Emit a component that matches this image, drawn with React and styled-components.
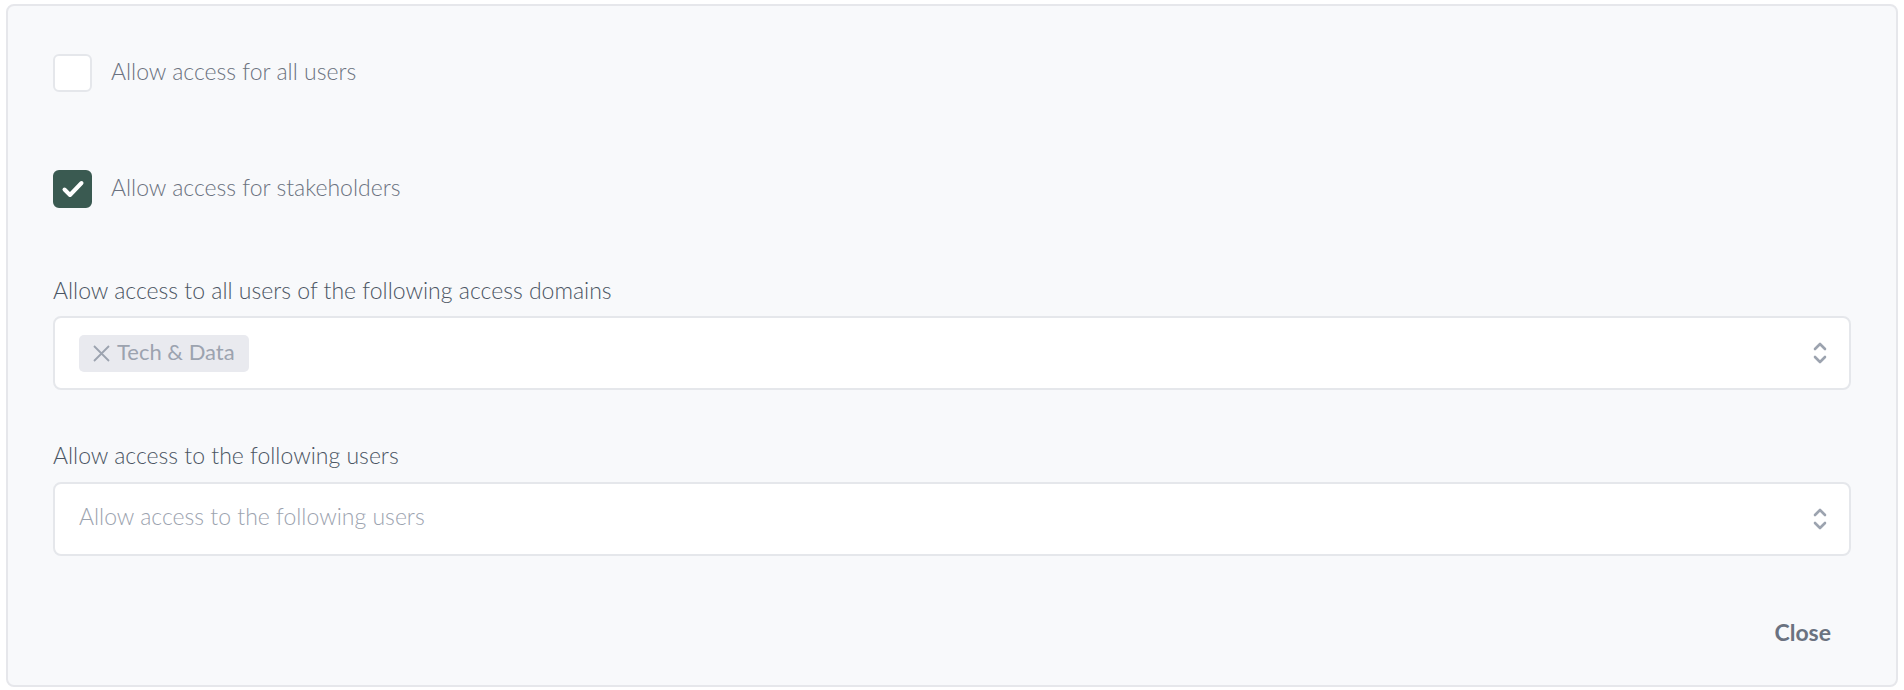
import styled, { createGlobalStyle } from "styled-components";

const GlobalStyle = createGlobalStyle`
body {
    margin: 0;
    background: #ffffff;
    font-family: Lato, "Liberation Sans", sans-serif;
}
`;

const Page = styled.div`
padding: 4px 6px 3px 6px;
`;

const Panel = styled.div`
box-sizing: border-box;
height: 683px;
background: #f8f9fb;
border: 2px solid #e6e7eb;
border-radius: 8px;
padding: 48px 45px 0 45px;
display: flex;
flex-direction: column;
`;

const CheckRow = styled.label`
display: flex;
align-items: center;
gap: 19px;
height: 38px;
margin-bottom: ${(p) => p.gap}px;
cursor: pointer;
`;

const Box = styled.span`
box-sizing: border-box;
width: 39px;
height: 38px;
border-radius: 6px;
display: flex;
align-items: center;
justify-content: center;
background: ${(p) => (p.checked ? "#3a5a51" : "#ffffff")};
border: 2px solid ${(p) => (p.checked ? "#3a5a51" : "#e5e7eb")};
`;

const CheckText = styled.span`
font-size: 23px;
font-weight: 300;
color: #6b7280;
margin-bottom: 5px;
`;

const Field = styled.div`
display: flex;
flex-direction: column;
gap: ${(p) => p.inner}px;
margin-bottom: ${(p) => p.gap}px;
`;

const FieldLabel = styled.div`
font-size: 23px;
font-weight: 300;
line-height: 28px;
color: #4b5563;
`;

const Select = styled.div`
box-sizing: border-box;
height: 74px;
background: #ffffff;
border: 2px solid #e5e7eb;
border-radius: 8px;
display: flex;
align-items: center;
padding: 0 22px 0 24px;
`;

const Values = styled.div`
flex: 1;
display: flex;
align-items: center;
gap: 8px;
`;

const Tag = styled.span`
display: inline-flex;
align-items: center;
gap: 6px;
height: 37px;
padding: 0 14px 0 13px;
border-radius: 5px;
background: #e9eaef;
color: #9ca3af;
font-size: 22px;
font-weight: 400;
`;

const TagText = styled.span`
margin-bottom: 4px;
`;

const Placeholder = styled.span`
font-size: 23px;
font-weight: 300;
color: #9ca3af;
margin-bottom: 7px;
`;

const Footer = styled.div`
display: flex;
justify-content: flex-end;
margin-top: 54px;
`;

const CloseButton = styled.button`
background: none;
border: none;
padding: 8px 20px;
font-family: Lato, "Liberation Sans", sans-serif;
font-size: 23px;
font-weight: 700;
color: #6b7280;
cursor: pointer;
`;

const Check = () => (
    <svg width="24" height="20" viewBox="0 0 24 20" fill="none">
        <path d="M3.5 10.5 L9 16 L20.5 4" stroke="#ffffff" strokeWidth="4" strokeLinecap="round" strokeLinejoin="round" />
    </svg>
);

const Cross = () => (
    <svg width="19" height="19" viewBox="0 0 19 19" fill="none">
        <path d="M2 2 L17 17 M17 2 L2 17" stroke="#9ca3af" strokeWidth="1.8" />
    </svg>
);

const UpDown = () => (
    <svg width="14" height="24" viewBox="0 0 14 24" fill="none">
        <path d="M2 8 L7 3 L12 8 M2 16 L7 21 L12 16" stroke="#9ca3af" strokeWidth="2.6" strokeLinecap="round" strokeLinejoin="round" />
    </svg>
);

const App = () => {
    return (
        <Page>
            <GlobalStyle />
            <Panel>
                <CheckRow gap={78}>
                    <Box />
                    <CheckText>Allow access for all users</CheckText>
                </CheckRow>
                <CheckRow gap={68}>
                    <Box checked>
                        <Check />
                    </Box>
                    <CheckText>Allow access for stakeholders</CheckText>
                </CheckRow>
                <Field inner={12} gap={51}>
                    <FieldLabel>Allow access to all users of the following access domains</FieldLabel>
                    <Select>
                        <Values>
                            <Tag>
                                <Cross />
                                <TagText>Tech &amp; Data</TagText>
                            </Tag>
                        </Values>
                        <UpDown />
                    </Select>
                </Field>
                <Field inner={13} gap={0}>
                    <FieldLabel>Allow access to the following users</FieldLabel>
                    <Select>
                        <Values>
                            <Placeholder>Allow access to the following users</Placeholder>
                        </Values>
                        <UpDown />
                    </Select>
                </Field>
                <Footer>
                    <CloseButton>Close</CloseButton>
                </Footer>
            </Panel>
        </Page>
    );
};

export default App;
